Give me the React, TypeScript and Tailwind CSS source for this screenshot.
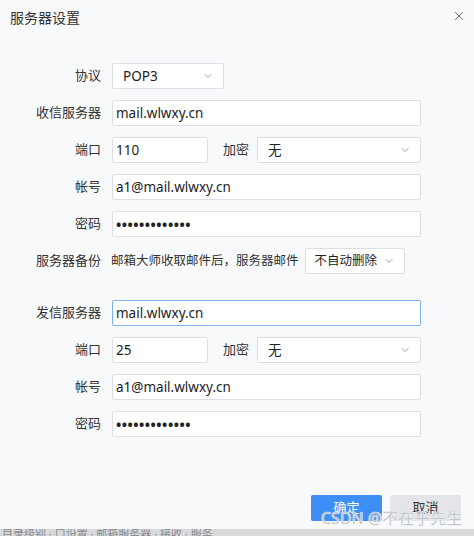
import React from 'react';
import { X, ChevronDown } from 'lucide-react';

const font = { fontFamily: '"Noto Sans", "Noto Sans CJK SC", sans-serif' };

const Label: React.FC<{ text: string }> = ({ text }) => (
  <div className="w-[101px] shrink-0 text-right text-[13px] text-[#333]">{text}</div>
);

const Field: React.FC<{ value: string; focused?: boolean; dots?: boolean; className?: string }> = ({
  value,
  focused,
  dots,
  className = 'w-[309px]'
}) => (
  <div
    className={`${className} h-[26px] flex items-center px-[3px] bg-white rounded-[2px] border text-[#222] ${
      dots ? 'text-[14px] font-bold tracking-[0.5px]' : 'text-[13.5px]'
    } ${focused ? 'border-[#7fb0ef]' : 'border-[#dcdfe3]'}`}
  >
    {value}
  </div>
);

const Select: React.FC<{ value: string; className: string; small?: boolean }> = ({ value, className, small }) => (
  <div
    className={`${className} shrink-0 h-[26px] flex items-center justify-between pr-[9px] bg-white rounded-[2px] border border-[#dcdfe3] text-[#222] whitespace-nowrap ${
      small ? 'pl-[9px] text-[12.5px]' : 'pl-[10px] text-[13.5px]'
    }`}
  >
    <span>{value}</span>
    <ChevronDown className="h-3 w-3 shrink-0 text-[#777] stroke-[1.5]" />
  </div>
);

const Dots = '•••••••••••••';

export default function App() {
  return (
    <div className="relative w-[474px] h-[536px] bg-[#f8f9fb] flex flex-col overflow-hidden" style={font}>
      {/* header */}
      <div className="flex items-start justify-between pl-[10px] pr-[8px] pt-[7px]">
        <span className="text-[14px] text-[#333]">服务器设置</span>
        <X className="h-[14px] w-[14px] text-[#555] stroke-[1.5] mt-[2px]" />
      </div>

      {/* receive server */}
      <div className="flex flex-col gap-[11px] mt-[35px]">
        <div className="flex items-center gap-[11px]">
          <Label text="协议" />
          <Select value="POP3" className="w-[112px] h-[25px]" />
        </div>
        <div className="flex items-center gap-[11px]">
          <Label text="收信服务器" />
          <Field value="mail.wlwxy.cn" />
        </div>
        <div className="flex items-center gap-[11px]">
          <Label text="端口" />
          <Field value="110" className="w-[96px]" />
          <span className="ml-[4px] w-[26px] text-[13px] text-[#333]">加密</span>
          <Select value="无" className="w-[164px] -ml-[3px]" />
        </div>
        <div className="flex items-center gap-[11px]">
          <Label text="帐号" />
          <Field value="a1@mail.wlwxy.cn" />
        </div>
        <div className="flex items-center gap-[11px]">
          <Label text="密码" />
          <Field value={Dots} dots />
        </div>
        <div className="flex items-center gap-[11px]">
          <Label text="服务器备份" />
          <span className="text-[12.5px] text-[#333] -ml-[1px] whitespace-nowrap">邮箱大师收取邮件后，服务器邮件</span>
          <Select value="不自动删除" className="w-[100px] -ml-[5px]" small />
        </div>
      </div>

      {/* send server */}
      <div className="flex flex-col gap-[11px] mt-[26px]">
        <div className="flex items-center gap-[11px]">
          <Label text="发信服务器" />
          <Field value="mail.wlwxy.cn" focused />
        </div>
        <div className="flex items-center gap-[11px]">
          <Label text="端口" />
          <Field value="25" className="w-[96px]" />
          <span className="ml-[4px] w-[26px] text-[13px] text-[#333]">加密</span>
          <Select value="无" className="w-[164px] -ml-[3px]" />
        </div>
        <div className="flex items-center gap-[11px]">
          <Label text="帐号" />
          <Field value="a1@mail.wlwxy.cn" />
        </div>
        <div className="flex items-center gap-[11px]">
          <Label text="密码" />
          <Field value={Dots} dots />
        </div>
      </div>

      {/* footer buttons */}
      <div className="flex justify-end gap-[8px] pr-[13px] mt-[58px]">
        <button className="w-[71px] h-[26px] rounded-[2px] bg-[#3d8ff5] text-white text-[13px]">确定</button>
        <button className="w-[71px] h-[26px] rounded-[2px] bg-[#e3e5e9] text-[#333] text-[13px]">取消</button>
      </div>

      {/* bottom strip */}
      <div className="mt-auto h-[7px] bg-[#d8d9db] overflow-hidden flex px-[2px]">
        <span className="text-[11px] leading-[12px] text-[#8a8a8a] -mt-[1px]">目录级别 · 口设置 · 邮箱服务器 · 接收 · 服务</span>
      </div>

      {/* watermark */}
      <div className="absolute left-[321px] top-[508px] text-[16px] leading-[20px] text-[#c4c7cc] [text-shadow:0_0_1px_#fff,0_0_1px_#fff]">
        CSDN @不在乎先生
      </div>
    </div>
  );
}
